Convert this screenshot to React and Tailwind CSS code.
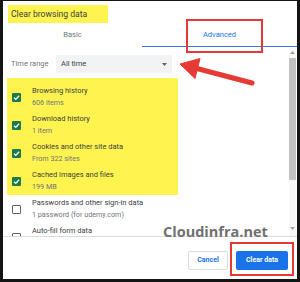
import React from 'react';

const items = [
  { title: 'Browsing history', sub: '606 items' },
  { title: 'Download history', sub: '1 item' },
  { title: 'Cookies and other site data', sub: 'From 322 sites' },
  { title: 'Cached images and files', sub: '199 MB' },
];

const CheckBox = ({ checked }) =>
  checked ? (
    <svg width="9" height="9" viewBox="0 0 9 9" className="shrink-0">
      <rect x="0" y="0" width="9" height="9" rx="1" fill="#1e7a4c" />
      <path d="M2 4.6 L3.8 6.4 L7.1 2.8" stroke="#fff" strokeWidth="1.3" fill="none" />
    </svg>
  ) : (
    <div className="w-[9px] h-[9px] shrink-0 rounded-[1px] border border-[#5f6368]" />
  );

const Item = ({ title, sub, checked }) => (
  <div className="h-[28px] flex items-center pl-[5px] gap-[11px]">
    <CheckBox checked={checked} />
    <div className="flex flex-col">
      <span className="text-[7.5px] leading-[12px] font-normal text-[#3c4043]">{title}</span>
      <span className="h-[12px] text-[7.2px] leading-[12px] text-[#70757a]">{sub}</span>
    </div>
  </div>
);

export default function App() {
  return (
    <div className="w-[300px] h-[282px] bg-[#141414] pt-px px-[3px] pb-[3px]">
      <div className="relative h-full bg-white flex flex-col overflow-hidden font-['Roboto',sans-serif]">
        {/* Header */}
        <div className="pl-[5px] pt-[4px]">
          <div className="w-[100px] h-[18px] bg-[#fff44f] flex items-center pl-[3px] text-[8.6px] text-[#3c4043]">
            Clear browsing data
          </div>
        </div>

        {/* Tabs */}
        <div className="flex h-[24px]">
          <div className="w-[139px] flex items-center justify-center text-[7.5px] text-[#70757a]">Basic</div>
          <div className="flex-1 flex items-center justify-center text-[7.5px] text-[#1a73e8] border-b-[1.5px] border-[#3b78e7]">
            Advanced
          </div>
        </div>

        {/* Body */}
        <div className="flex h-[190px] overflow-hidden border-b border-[#dadce0]">
          <div className="flex-1 flex flex-col">
            {/* Time range */}
            <div className="flex items-center pl-[8px] pt-[8px]">
              <span className="w-[45px] text-[7.5px] text-[#70757a]">Time range</span>
              <div className="w-[116px] h-[18px] bg-[#f1f3f4] flex items-center justify-between pl-[5px] pr-[5px]">
                <span className="text-[7.5px] text-[#3c4043]">All time</span>
                <svg width="5" height="3" viewBox="0 0 5 3">
                  <path d="M0 0 H5 L2.5 3 Z" fill="#5f6368" />
                </svg>
              </div>
            </div>

            {/* Highlighted items */}
            <div className="mt-[5px] ml-[4px] w-[171px] h-[118px] bg-[#fff44f] pt-[5px]">
              {items.map((it) => (
                <Item key={it.title} title={it.title} sub={it.sub} checked />
              ))}
            </div>

            <div className="pl-[4px]">
              <Item title="Passwords and other sign-in data" sub="1 password (for udemy.com)" />
              <Item title="Auto-fill form data" />
            </div>
          </div>

          {/* Scrollbar */}
          <div className="w-[7px] mr-px flex flex-col items-center bg-[#f8f8f8]">
            <svg width="5" height="3" viewBox="0 0 5 3" className="mt-[4px]">
              <path d="M0 3 H5 L2.5 0 Z" fill="#a0a0a0" />
            </svg>
            <div className="mt-[4px] w-full h-[122px] bg-[#c1c1c1]" />
            <div className="flex-1" />
            <svg width="5" height="3" viewBox="0 0 5 3" className="mb-[6px]">
              <path d="M0 0 H5 L2.5 3 Z" fill="#a0a0a0" />
            </svg>
          </div>
        </div>

        {/* Footer */}
        <div className="flex-1 flex items-center justify-end gap-[8px] pr-[9px] pt-[4px]">
          <button className="w-[40px] h-[19px] rounded-[2px] border border-[#dadce0] bg-white text-[7px] font-bold text-[#1a73e8]">
            Cancel
          </button>
          <button className="w-[52px] h-[19px] rounded-[2px] bg-[#1a73e8] text-[7px] font-bold text-white">
            Clear data
          </button>
        </div>

        {/* Annotations */}
        <div className="absolute left-[183px] top-[18px] w-[77px] h-[34px] border-2 border-[#e53935]" />
        <div className="absolute left-[227px] top-[241px] w-[64px] h-[34px] border-2 border-[#e53935]" />
        <svg className="absolute left-[170px] top-[50px]" width="90" height="40" viewBox="0 0 90 40">
          <line x1="22" y1="17" x2="79" y2="32" stroke="#e63b35" strokeWidth="5" strokeLinecap="round" />
          <path d="M7 13 L27 7.5 L22 27.5 Z" fill="#e63b35" strokeLinejoin="round" stroke="#e63b35" strokeWidth="1" />
        </svg>
        <div className="absolute left-[160px] top-[224px] text-[14.5px] leading-none font-bold text-[#707070] font-['Open_Sans',sans-serif]">
          Cloudinfra.net
        </div>
      </div>
    </div>
  );
}
